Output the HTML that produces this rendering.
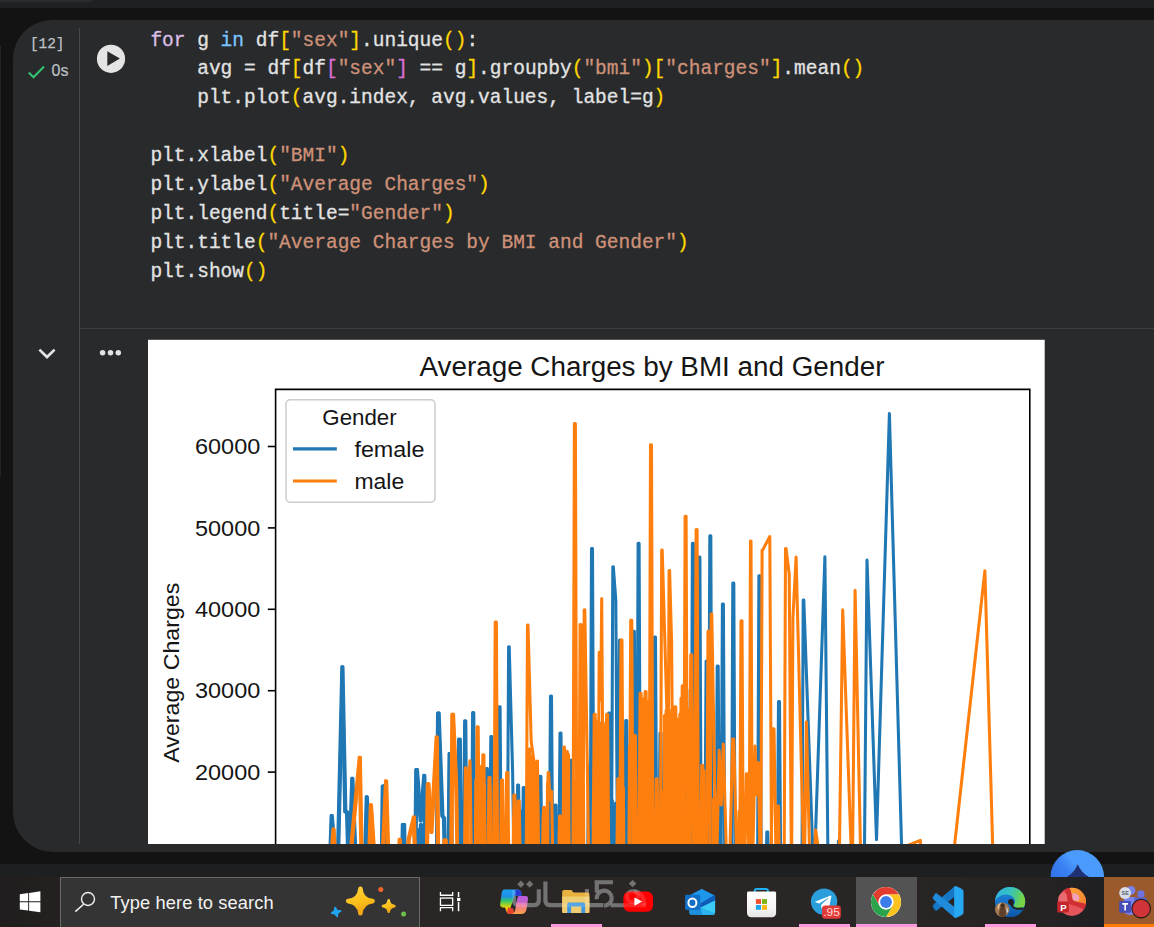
<!DOCTYPE html>
<html><head><meta charset="utf-8"><title>colab</title>
<style>
html,body{margin:0;padding:0;}
body{width:1154px;height:927px;overflow:hidden;background:#131314;position:relative;font-family:"Liberation Sans",sans-serif;}
.abs{position:absolute;}
#topbar{left:0;top:0;width:1154px;height:8px;background:#1f2022;}
#toptab{left:0;top:0;width:92px;height:2px;background:#2b2c2f;border-bottom-right-radius:6px;}
#cell{left:13px;top:20px;width:1141px;height:831.6px;background:#282a2c;border-radius:39px 0 0 40px;}
#vline{left:79px;top:28px;width:1px;height:816px;background:#47494c;}
#hline{left:80px;top:328px;width:1074px;height:1px;background:#3c3e41;}
#leftstrip{left:0;top:46px;width:1.4px;height:431px;background:#232426;}
#band2{left:0;top:864px;width:1154px;height:13px;background:#1e1f21;}
#taskbar{left:0;top:877px;width:1154px;height:50px;background:linear-gradient(90deg,#1f1d1d 0,#242120 5%,#2a2625 38%,#2a2625 70%,#262323 90%,#1f2023 95.5%);}
.code{-webkit-text-stroke:0.3px;font-family:"Liberation Mono",monospace;font-size:19.5px;line-height:28.875px;color:#e3e3e3;white-space:pre;left:150.4px;top:26.6px;letter-spacing:0px;}
.k1{color:#dcbfe6}.k2{color:#7cc5ff}.s{color:#ce9178}.y{color:#ffd700}.m{color:#da70d6}
#exec{-webkit-text-stroke:0.25px;left:29.9px;top:35.5px;font-family:"Liberation Mono",monospace;font-size:14.4px;color:#bdc1c6;line-height:16px;}
#zs{-webkit-text-stroke:0.2px;left:51.6px;top:62.4px;font-size:16px;color:#bdc1c6;line-height:18px;}
</style></head><body>
<div class="abs" id="topbar"></div><div class="abs" id="toptab"></div>
<div class="abs" id="leftstrip"></div>
<div class="abs" id="cell"></div>
<div class="abs" id="vline"></div><div class="abs" id="hline"></div>
<div class="abs" id="exec">[12]</div>
<svg class="abs" style="left:27px;top:64px" width="20" height="16" viewBox="0 0 20 16"><path d="M1.8 8.6 L6.5 13.2 L17 2.6" fill="none" stroke="#34c472" stroke-width="2.1"/></svg>
<div class="abs" id="zs">0s</div>
<svg class="abs" style="left:96px;top:44px" width="30" height="30" viewBox="0 0 30 30"><circle cx="15" cy="14.8" r="14.1" fill="#e4e4e4"/><path d="M11.3 7.2 L23.9 14.6 L11.3 22 Z" fill="#28292b"/></svg>
<div class="abs code"><span class="k1">for</span> g <span class="k2">in</span> df<span class="y">[</span><span class="s">"sex"</span><span class="y">]</span>.unique<span class="y">()</span>:
    avg = df<span class="y">[</span>df<span class="m">[</span><span class="s">"sex"</span><span class="m">]</span> == g<span class="y">]</span>.groupby<span class="y">(</span><span class="s">"bmi"</span><span class="y">)[</span><span class="s">"charges"</span><span class="y">]</span>.mean<span class="y">()</span>
    plt.plot<span class="y">(</span>avg.index, avg.values, label=g<span class="y">)</span>

plt.xlabel<span class="y">(</span><span class="s">"BMI"</span><span class="y">)</span>
plt.ylabel<span class="y">(</span><span class="s">"Average Charges"</span><span class="y">)</span>
plt.legend<span class="y">(</span>title=<span class="s">"Gender"</span><span class="y">)</span>
plt.title<span class="y">(</span><span class="s">"Average Charges by BMI and Gender"</span><span class="y">)</span>
plt.show<span class="y">()</span></div>
<svg class="abs" style="left:36px;top:344px" width="22" height="18" viewBox="0 0 22 18"><path d="M3.4 5.6 L11 13 L18.6 5.6" fill="none" stroke="#e3e3e3" stroke-width="2.7"/></svg>
<svg class="abs" style="left:98px;top:348px" width="26" height="10" viewBox="0 0 26 10"><circle cx="4.6" cy="4.7" r="2.75" fill="#e3e3e3"/><circle cx="12.5" cy="4.7" r="2.75" fill="#e3e3e3"/><circle cx="20.3" cy="4.7" r="2.75" fill="#e3e3e3"/></svg>
<svg class="abs" style="left:148px;top:339px" width="897" height="505" viewBox="148 339 897 505">
<rect x="148" y="339.8" width="896.7" height="504.2" fill="#fff"/>
<defs><clipPath id="ax"><rect x="275.6" y="389.4" width="754" height="470"/></clipPath><clipPath id="lft"><rect x="275.6" y="389.4" width="183" height="470"/></clipPath></defs>
<g clip-path="url(#ax)" fill="none" stroke-width="3.05" stroke-linejoin="round" stroke-linecap="butt">
<g stroke="#1f77b4">
<polyline points="414.7,905.0 415.5,827.2 416.3,905.0 417.1,830.5 417.9,905.0 418.7,829.4 419.5,905.0 420.3,824.6 421.1,905.0 421.9,824.4 422.7,905.0 423.5,824.7 424.3,905.0 425.1,828.2 425.9,905.0"/>
<polyline points="515.2,905.0 516.0,803.2 516.8,905.0 517.6,808.3 518.4,905.0 519.2,807.8 520.0,905.0 520.8,811.8 521.6,905.0 522.4,810.6 523.2,905.0 524.0,803.4 524.8,905.0"/>
<polyline points="605.2,905.0 606.0,803.1 606.8,905.0 607.6,801.8 608.4,905.0 609.2,806.4 610.0,905.0 610.8,805.5 611.6,905.0 612.4,800.6 613.2,905.0 614.0,806.8 614.8,905.0 615.6,803.1 616.4,905.0 617.2,804.5 618.0,905.0"/>
<polyline points="329.4,882.0 331.7,815.5 337.4,882.0 342.4,666.7 345.3,812.0 347.1,812.0 349.0,882.0 352.3,778.2 356.5,882.0 364.5,882.0 366.8,796.7 370.2,882.0 381.4,905.0 382.8,786.0 383.9,786.0 385.4,905.0 401.5,905.0 402.9,824.6 404.1,824.6 405.5,905.0 414.9,905.0 416.3,769.6 416.9,769.6 420.7,821.0 424.3,775.4 426.3,905.0 436.6,905.0 438.1,712.9 438.6,712.9 442.4,816.0 444.0,818.0 446.0,905.0 448.1,905.0 449.6,753.6 450.7,753.6 452.1,905.0 457.8,905.0 459.2,739.0 460.4,739.0 461.8,905.0 463.2,905.0 464.6,720.7 465.8,720.7 467.2,905.0 471.2,905.0 472.6,712.6 473.8,712.6 475.2,905.0 484.8,905.0 486.2,768.5 487.4,768.5 488.8,905.0 489.3,905.0 490.8,736.6 491.9,736.6 493.3,905.0 497.5,905.0 498.9,706.8 500.1,706.8 501.5,905.0 507.2,905.0 508.6,646.8 509.2,646.8 512.6,770.9 514.6,905.0 516.1,905.0 517.6,785.0 518.6,785.0 520.1,905.0 521.8,905.0 523.2,787.5 524.3,787.5 525.8,905.0 538.4,905.0 539.9,776.3 540.9,776.3 542.4,905.0 549.0,905.0 550.5,695.9 551.5,695.9 553.0,905.0 553.5,905.0 555.0,804.9 556.0,804.9 557.5,905.0 558.5,905.0 560.0,732.9 561.0,732.9 562.5,905.0 569.1,905.0 570.6,760.2 571.6,760.2 573.1,905.0 587.2,905.0 588.7,766.4 589.8,766.4 591.2,905.0 590.0,905.0 591.5,548.4 592.5,548.4 594.0,905.0 600.1,905.0 601.6,798.7 602.6,798.7 604.1,905.0 607.1,905.0 608.6,713.0 609.6,713.0 611.1,905.0 611.3,905.0 612.8,566.7 613.3,566.7 615.8,599.8 617.8,905.0 618.0,905.0 619.5,639.9 620.5,639.9 622.0,905.0 624.2,905.0 625.7,720.5 626.8,720.5 628.2,905.0 631.9,905.0 633.4,631.2 634.4,631.2 635.9,905.0 636.6,905.0 638.1,543.2 639.1,543.2 640.6,905.0 653.0,905.0 654.5,636.9 655.5,636.9 657.0,905.0 658.5,905.0 660.0,732.9 661.0,732.9 662.5,905.0 676.6,905.0 678.1,778.8 679.1,778.8 680.6,905.0 684.2,905.0 685.7,689.5 686.8,689.5 688.2,905.0 690.9,905.0 692.4,543.2 693.4,543.2 694.9,905.0 697.4,905.0 698.9,557.1 699.9,557.1 701.4,905.0 704.6,905.0 706.1,661.0 707.1,661.0 708.6,905.0 708.3,905.0 709.8,535.7 710.8,535.7 712.3,905.0 715.7,905.0 717.2,665.9 718.2,665.9 719.7,905.0 720.9,905.0 722.4,604.0 723.4,604.0 724.9,905.0 731.3,905.0 732.8,583.1 733.8,583.1 735.3,905.0 757.4,905.0 758.9,575.7 759.9,575.7 761.4,905.0 765.3,905.0 766.8,832.0 767.8,832.0 769.3,905.0 777.0,905.0 778.5,701.4 779.5,701.4 781.0,905.0 801.8,905.0 803.2,600.0 803.8,600.0 813.9,882.0 824.9,556.8 828.2,882.0 837.0,882.0 838.5,841.0 840.0,882.0 864.2,882.0 867.0,560.0 876.5,839.6 889.4,413.6 902.6,882.0"/>
<g clip-path="url(#lft)"><polyline points="329.4,882.0 331.7,815.5 337.4,882.0 342.4,666.7 345.3,812.0 347.1,812.0 349.0,882.0 352.3,778.2 356.5,882.0 364.5,882.0 366.8,796.7 370.2,882.0 381.4,905.0 382.8,786.0 383.9,786.0 385.4,905.0 401.5,905.0 402.9,824.6 404.1,824.6 405.5,905.0 414.9,905.0 416.3,769.6 416.9,769.6 420.7,821.0 424.3,775.4 426.3,905.0 436.6,905.0 438.1,712.9 438.6,712.9 442.4,816.0 444.0,818.0 446.0,905.0 448.1,905.0 449.6,753.6 450.7,753.6 452.1,905.0 457.8,905.0 459.2,739.0 460.4,739.0 461.8,905.0 463.2,905.0 464.6,720.7 465.8,720.7 467.2,905.0" transform="translate(-0.6 0)"/><polyline points="329.4,882.0 331.7,815.5 337.4,882.0 342.4,666.7 345.3,812.0 347.1,812.0 349.0,882.0 352.3,778.2 356.5,882.0 364.5,882.0 366.8,796.7 370.2,882.0 381.4,905.0 382.8,786.0 383.9,786.0 385.4,905.0 401.5,905.0 402.9,824.6 404.1,824.6 405.5,905.0 414.9,905.0 416.3,769.6 416.9,769.6 420.7,821.0 424.3,775.4 426.3,905.0 436.6,905.0 438.1,712.9 438.6,712.9 442.4,816.0 444.0,818.0 446.0,905.0 448.1,905.0 449.6,753.6 450.7,753.6 452.1,905.0 457.8,905.0 459.2,739.0 460.4,739.0 461.8,905.0 463.2,905.0 464.6,720.7 465.8,720.7 467.2,905.0" transform="translate(0.6 0)"/></g>
</g><g stroke="#ff7f0e">
<polyline points="467.0,905.0 467.8,777.3 468.6,905.0"/>
<polyline points="475.0,905.0 475.8,780.0 476.6,905.0"/>
<polyline points="478.2,905.0 479.0,768.4 479.8,905.0 480.6,766.4 481.4,905.0"/>
<polyline points="483.7,905.0 484.5,785.3 485.3,905.0"/>
<polyline points="493.3,905.0 494.1,785.7 494.9,905.0 495.7,780.2 496.5,905.0"/>
<polyline points="528.7,905.0 529.5,748.7 530.3,905.0 531.1,756.0 531.9,905.0 532.7,759.6 533.5,905.0 534.3,761.6 535.1,905.0 535.9,766.2 536.7,905.0 537.5,761.0 538.3,905.0"/>
<polyline points="542.4,905.0 543.2,814.4 544.0,905.0 544.8,813.0 545.6,905.0 546.4,813.9 547.2,905.0"/>
<polyline points="546.7,905.0 547.5,782.9 548.3,905.0"/>
<polyline points="563.0,905.0 563.8,757.6 564.6,905.0 565.4,754.7 566.2,905.0 567.0,758.9 567.8,905.0 568.6,754.5 569.4,905.0"/>
<polyline points="573.0,905.0 573.8,780.6 574.6,905.0 575.4,780.0 576.2,905.0"/>
<polyline points="579.4,905.0 580.2,785.7 581.0,905.0 581.8,787.9 582.6,905.0 583.4,784.6 584.2,905.0"/>
<polyline points="593.9,905.0 594.7,718.4 595.5,905.0 596.3,721.1 597.1,905.0 597.9,727.0 598.7,905.0 599.5,722.6 600.3,905.0 601.1,724.4 601.9,905.0 602.7,723.6 603.5,905.0 604.3,727.4 605.1,905.0 605.9,722.3 606.7,905.0"/>
<polyline points="622.6,905.0 623.4,787.9 624.2,905.0"/>
<polyline points="628.7,905.0 629.5,746.1 630.3,905.0"/>
<polyline points="641.4,905.0 642.2,698.6 643.0,905.0 643.8,698.7 644.6,905.0 645.4,698.0 646.2,905.0"/>
<polyline points="647.8,905.0 648.6,700.7 649.4,905.0 650.2,698.1 651.0,905.0 651.8,703.0 652.6,905.0"/>
<polyline points="662.8,905.0 663.6,790.3 664.4,905.0"/>
<polyline points="663.7,905.0 664.5,715.6 665.3,905.0 666.1,710.6 666.9,905.0 667.7,716.4 668.5,905.0 669.3,710.1 670.1,905.0 670.9,713.4 671.7,905.0 672.5,716.5 673.3,905.0 674.1,710.5 674.9,905.0 675.7,717.0 676.5,905.0"/>
<polyline points="675.2,905.0 676.0,726.1 676.8,905.0 677.6,719.3 678.4,905.0 679.2,725.9 680.0,905.0 680.8,721.5 681.6,905.0"/>
<polyline points="680.2,905.0 681.0,698.2 681.8,905.0 682.6,704.4 683.4,905.0"/>
<polyline points="688.2,905.0 689.0,709.7 689.8,905.0"/>
<polyline points="694.4,905.0 695.2,707.9 696.0,905.0 696.8,707.8 697.6,905.0"/>
<polyline points="701.8,905.0 702.6,768.7 703.4,905.0 704.2,770.9 705.0,905.0"/>
<polyline points="712.6,905.0 713.4,799.0 714.2,905.0 715.0,790.1 715.8,905.0"/>
<polyline points="329.4,882.0 333.5,829.0 336.5,882.0 348.0,882.0 359.8,757.3 362.0,882.0 368.5,882.0 370.9,804.7 376.0,882.0 381.5,882.0 386.1,780.9 389.0,882.0 398.0,882.0 399.7,839.3 401.5,882.0 407.0,882.0 408.7,839.3 413.9,817.1 415.6,882.0 426.4,905.0 427.8,783.8 428.4,783.8 431.4,832.5 436.7,737.0 438.7,905.0 443.0,905.0 444.4,840.0 445.6,840.0 447.0,905.0 451.0,905.0 452.4,714.2 453.0,714.2 456.4,789.7 458.4,905.0 464.0,905.0 465.4,767.8 466.0,767.8 468.0,792.0 470.0,760.7 472.0,905.0 475.7,905.0 477.1,726.7 478.2,726.7 479.7,905.0 481.4,905.0 482.8,754.8 483.9,754.8 485.4,905.0 487.5,905.0 488.9,777.6 490.1,777.6 491.5,905.0 493.8,905.0 495.2,622.0 496.4,622.0 497.8,905.0 500.0,905.0 501.4,780.0 502.6,780.0 504.0,905.0 505.2,905.0 506.6,772.6 507.8,772.6 509.2,905.0 512.4,905.0 513.9,795.0 514.9,795.0 516.4,905.0 516.8,905.0 518.2,801.0 519.3,801.0 520.8,905.0 526.0,905.0 527.5,625.0 528.0,625.0 531.2,741.6 534.5,765.0 537.2,761.4 539.2,905.0 542.1,905.0 543.6,807.3 544.6,807.3 546.1,905.0 546.6,905.0 548.1,772.6 548.6,772.6 550.0,800.0 551.6,791.2 553.6,905.0 558.0,905.0 559.5,816.0 560.5,816.0 562.0,905.0 562.4,905.0 563.9,747.0 564.4,747.0 566.0,760.0 567.4,751.5 569.4,905.0 572.9,905.0 574.4,423.6 575.4,423.6 576.9,905.0 578.6,905.0 580.1,624.6 581.1,624.6 582.6,905.0 582.8,905.0 584.2,609.7 584.8,609.7 587.3,763.9 589.3,905.0 592.7,905.0 594.2,714.3 595.2,714.3 596.7,905.0 597.7,905.0 599.2,652.3 599.7,652.3 600.7,700.0 601.7,598.5 603.7,905.0 605.1,905.0 606.6,714.3 607.6,714.3 609.1,905.0 616.3,905.0 617.8,778.8 618.8,778.8 620.3,905.0 619.5,905.0 621.0,639.9 622.0,639.9 623.5,905.0 629.2,905.0 630.7,620.3 631.8,620.3 633.2,905.0 632.9,905.0 634.4,735.4 635.4,735.4 636.9,905.0 638.6,905.0 640.1,693.2 641.1,693.2 642.6,905.0 643.6,905.0 645.1,691.5 646.1,691.5 647.6,905.0 649.0,905.0 650.5,444.7 651.5,444.7 653.0,905.0 654.7,905.0 656.2,778.8 657.2,778.8 658.7,905.0 660.2,905.0 661.7,550.1 662.2,550.1 666.7,704.4 668.7,905.0 667.6,905.0 669.1,570.5 669.6,570.5 671.6,642.3 673.6,905.0 673.3,905.0 674.8,706.8 675.8,706.8 677.3,905.0 678.3,905.0 679.8,714.3 680.8,714.3 682.3,905.0 680.8,905.0 682.2,685.8 683.3,685.8 684.8,905.0 683.6,905.0 685.1,516.3 686.1,516.3 687.6,905.0 689.2,905.0 690.7,654.7 691.8,654.7 693.2,905.0 694.6,905.0 696.1,529.5 697.1,529.5 698.6,905.0 700.3,905.0 701.8,765.2 702.8,765.2 704.3,905.0 706.5,905.0 708.0,631.2 709.0,631.2 710.5,905.0 709.8,905.0 711.2,613.9 711.8,613.9 716.3,882.0 719.2,750.2 721.2,805.0 723.3,744.0 727.2,882.0 728.6,905.0 732.7,739.0 733.8,739.0 737.8,905.0 737.6,905.0 739.1,811.0 740.1,811.0 741.6,905.0 739.5,905.0 741.0,620.8 742.0,620.8 743.5,905.0 744.1,905.0 746.4,773.8 747.4,773.8 749.7,905.0 749.0,905.0 750.5,540.9 751.0,540.9 752.3,882.0 755.1,746.1 756.8,795.0 758.2,762.5 760.6,882.0 760.6,905.0 762.1,550.1 762.6,550.1 769.8,536.5 771.8,905.0 770.3,905.0 773.0,728.7 774.0,728.7 776.7,905.0 776.0,905.0 777.5,806.0 778.5,806.0 780.0,905.0 784.0,905.0 785.5,548.4 786.0,548.4 789.2,573.7 791.5,882.0 792.9,618.4 796.1,557.1 804.3,882.0 806.4,721.7 810.3,882.0 813.2,882.0 815.6,830.0 823.5,882.0 839.0,882.0 842.7,609.7 852.3,882.0 855.1,590.3 861.2,882.0 905.0,846.5 920.3,840.4 922.8,882.0 950.5,882.0 984.9,570.7 993.7,882.0"/>
<g clip-path="url(#lft)"><polyline points="329.4,882.0 333.5,829.0 336.5,882.0 348.0,882.0 359.8,757.3 362.0,882.0 368.5,882.0 370.9,804.7 376.0,882.0 381.5,882.0 386.1,780.9 389.0,882.0 398.0,882.0 399.7,839.3 401.5,882.0 407.0,882.0 408.7,839.3 413.9,817.1 415.6,882.0 426.4,905.0 427.8,783.8 428.4,783.8 431.4,832.5 436.7,737.0 438.7,905.0 443.0,905.0 444.4,840.0 445.6,840.0 447.0,905.0 451.0,905.0 452.4,714.2 453.0,714.2 456.4,789.7 458.4,905.0 464.0,905.0 465.4,767.8 466.0,767.8 468.0,792.0" transform="translate(-0.6 0)"/><polyline points="329.4,882.0 333.5,829.0 336.5,882.0 348.0,882.0 359.8,757.3 362.0,882.0 368.5,882.0 370.9,804.7 376.0,882.0 381.5,882.0 386.1,780.9 389.0,882.0 398.0,882.0 399.7,839.3 401.5,882.0 407.0,882.0 408.7,839.3 413.9,817.1 415.6,882.0 426.4,905.0 427.8,783.8 428.4,783.8 431.4,832.5 436.7,737.0 438.7,905.0 443.0,905.0 444.4,840.0 445.6,840.0 447.0,905.0 451.0,905.0 452.4,714.2 453.0,714.2 456.4,789.7 458.4,905.0 464.0,905.0 465.4,767.8 466.0,767.8 468.0,792.0" transform="translate(0.6 0)"/></g>
</g></g>
<g fill="none" stroke="#000" stroke-width="1.6"><path d="M275.6 860 V389.4 H1029.8 V860"/></g>
<path d="M267.8 446.5 H275.6" stroke="#000" stroke-width="1.6"/>
<text x="260.3" y="454.1" text-anchor="end" font-size="22.3" textLength="65.3" lengthAdjust="spacingAndGlyphs" fill="#151515">60000</text>
<path d="M267.8 527.9 H275.6" stroke="#000" stroke-width="1.6"/>
<text x="260.3" y="535.5" text-anchor="end" font-size="22.3" textLength="65.3" lengthAdjust="spacingAndGlyphs" fill="#151515">50000</text>
<path d="M267.8 609.3 H275.6" stroke="#000" stroke-width="1.6"/>
<text x="260.3" y="616.9" text-anchor="end" font-size="22.3" textLength="65.3" lengthAdjust="spacingAndGlyphs" fill="#151515">40000</text>
<path d="M267.8 690.7 H275.6" stroke="#000" stroke-width="1.6"/>
<text x="260.3" y="698.3" text-anchor="end" font-size="22.3" textLength="65.3" lengthAdjust="spacingAndGlyphs" fill="#151515">30000</text>
<path d="M267.8 772.1 H275.6" stroke="#000" stroke-width="1.6"/>
<text x="260.3" y="779.7" text-anchor="end" font-size="22.3" textLength="65.3" lengthAdjust="spacingAndGlyphs" fill="#151515">20000</text>
<text x="419.5" y="375.7" font-size="26.8" textLength="465" lengthAdjust="spacingAndGlyphs" fill="#151515">Average Charges by BMI and Gender</text>
<text transform="translate(179.3 762.7) rotate(-90)" font-size="22.3" textLength="180" lengthAdjust="spacingAndGlyphs" fill="#151515">Average Charges</text>
<rect x="286" y="399.8" width="149" height="102.4" rx="4.2" ry="4.2" fill="#fff" fill-opacity="0.8" stroke="#ccc" stroke-width="1.5"/>
<text x="322.3" y="425" font-size="22.3" textLength="74.4" lengthAdjust="spacingAndGlyphs" fill="#151515">Gender</text>
<path d="M293 448.9 H336.8" stroke="#1f77b4" stroke-width="3.1"/>
<text x="354.4" y="456.7" font-size="22.3" textLength="70.1" lengthAdjust="spacingAndGlyphs" fill="#151515">female</text>
<path d="M293 481 H336.8" stroke="#ff7f0e" stroke-width="3.1"/>
<text x="354.4" y="488.8" font-size="22.3" textLength="49.8" lengthAdjust="spacingAndGlyphs" fill="#151515">male</text>
</svg>
<div class="abs" id="band2"></div>
<div class="abs" id="taskbar"></div>
<!-- floating blue button -->
<svg class="abs" style="left:1049px;top:849px" width="58" height="28" viewBox="1049 849 58 28">
<defs><linearGradient id="fb" gradientUnits="userSpaceOnUse" x1="1052" y1="880" x2="1082" y2="854"><stop offset="0" stop-color="#2f70ea"/><stop offset="0.45" stop-color="#3a81f2"/><stop offset="0.72" stop-color="#4a9bfd"/><stop offset="1" stop-color="#4a9bfd"/></linearGradient></defs>
<circle cx="1077.3" cy="876.8" r="26.7" fill="url(#fb)"/>
<path d="M1077.7 864.3 C1080 870 1084 874.5 1090 877.5 L1066 877.5 C1071.5 874.5 1075.5 870 1077.7 864.3 Z" fill="#1f3073"/>
</svg>
<!-- start -->
<svg class="abs" style="left:19px;top:890px" width="23" height="24" viewBox="19 890 23 24">
<path d="M19.8 894.2 L28.2 893 L28.2 901.3 L19.8 901.3 Z M29.1 892.9 L40.4 891.3 L40.4 901.3 L29.1 901.3 Z M19.8 902.2 L28.2 902.2 L28.2 910.6 L19.8 909.4 Z M29.1 902.2 L40.4 902.2 L40.4 912.3 L29.1 910.7 Z" fill="#fff"/>
</svg>
<!-- search box -->
<div class="abs" style="left:60px;top:877px;width:358px;height:49px;border:1px solid #6a6a6a;border-bottom:none;background:#343434;"></div>
<svg class="abs" style="left:72px;top:888px" width="28" height="28" viewBox="72 888 28 28"><circle cx="88" cy="899" r="6.5" fill="none" stroke="#f0f0f0" stroke-width="1.4"/><path d="M83.6 904.2 L75.3 911.6" stroke="#f0f0f0" stroke-width="1.5" fill="none"/></svg>
<div class="abs" id="stext" style="left:110.3px;top:891.5px;font-size:18.3px;line-height:22px;color:#f2f2f2;white-space:pre;letter-spacing:0.1px;">Type here to search</div>
<!-- sparkles -->
<svg class="abs" style="left:328px;top:884px" width="84" height="36" viewBox="328 884 84 36">
<defs><linearGradient id="gs" x1="0" y1="0" x2="0.3" y2="1"><stop offset="0" stop-color="#ffd23c"/><stop offset="0.6" stop-color="#fac01a"/><stop offset="1" stop-color="#f3a416"/></linearGradient></defs>
<path d="M360.4 888.9 Q361.5 900.0 372.6 901.1 Q361.5 902.2 360.4 913.3 Q359.3 902.2 348.2 901.1 Q359.3 900.0 360.4 888.9 Z" fill="url(#gs)" stroke="url(#gs)" stroke-width="4.6" stroke-linejoin="round"/>
<path d="M388.7 900.4 Q389.3 905.5 394.4 906.1 Q389.3 906.7 388.7 911.8 Q388.1 906.7 383.0 906.1 Q388.1 905.5 388.7 900.4 Z" fill="url(#gs)" stroke="url(#gs)" stroke-width="2.6" stroke-linejoin="round"/>
<g transform="rotate(-13 336.1 912)"><path d="M336.1 907.6 Q336.5 911.6 340.5 912.0 Q336.5 912.4 336.1 916.4 Q335.7 912.4 331.7 912.0 Q335.7 911.6 336.1 907.6 Z" fill="#20a4f1" stroke="#20a4f1" stroke-width="2" stroke-linejoin="round"/></g>
<circle cx="380.8" cy="889.5" r="2.5" fill="#f2652a"/>
<circle cx="403.6" cy="913.9" r="2.5" fill="#6cc04a"/>
</svg>
<!-- task view -->
<svg class="abs" style="left:438px;top:890px" width="24" height="24" viewBox="438 890 24 24" fill="none" stroke="#fff" stroke-width="1.3">
<path d="M440.45 892 V895.25 H452.65 V892"/>
<rect x="440.45" y="898.05" width="12.2" height="7.3"/>
<path d="M440.45 911.2 V907.65 H452.65 V911.2"/>
<path d="M458.55 892 V896.9 M458.55 902.1 V911.2" stroke-width="1.5"/><rect x="457" y="897.9" width="3.4" height="3.2" fill="#fff" stroke="none"/>
</svg>
<!-- chrome highlight -->
<div class="abs" style="left:856px;top:877px;width:61px;height:47px;background:#535353;"></div>
<!-- teams highlight -->
<div class="abs" style="left:1104px;top:877px;width:50px;height:47px;background:#9a5a2b;"></div>
<div class="abs" style="left:1104px;top:924px;width:50px;height:3px;background:#ff7a00;"></div>
<!-- pink underlines -->
<div class="abs" style="left:551px;top:924px;width:51px;height:3px;background:#ff97de;"></div>
<div class="abs" style="left:799px;top:924px;width:51px;height:3px;background:#ff97de;"></div>
<div class="abs" style="left:856px;top:924px;width:61px;height:3px;background:#ff97de;"></div>
<div class="abs" style="left:985px;top:924px;width:51px;height:3px;background:#ff97de;"></div>
<!-- watermark under -->
<svg class="abs" style="left:508px;top:877px" width="142" height="34" viewBox="508 877 142 34" fill="none" stroke="#5e5d5d" stroke-width="4.1">
<path d="M514 890 V900.6 Q514 905.1 518.5 905.1 H534.3 Q538.8 905.1 538.8 900.6 V889.3"/>
<path d="M545.4 881.4 V900.6 Q545.4 905.1 549.9 905.1 H603.4"/>
<path d="M587 889 V905.1"/>
<path d="M594.6 882.3 H612.9 M596.8 880.2 V892.4"/>
<path d="M596.8 899.2 A7.5 7.5 0 1 1 604.2 905.6"/>
<path d="M610.6 905.2 H645.8"/>
<circle cx="632.5" cy="896.7" r="5.5"/>
<path d="M634 891.3 Q644.3 892.6 644.3 905.2"/>
<g stroke="none" fill="#5e5d5d" fill-opacity="1">
<path d="M520.9 880.6 L524.5 884.2 L520.9 887.8 L517.3 884.2 Z"/>
<path d="M529.7 880.6 L533.3 884.2 L529.7 887.8 L526.1 884.2 Z"/>
<path d="M632.6 879.9 L636.3 883.6 L632.6 887.3 L628.9 883.6 Z"/>
</g>
</svg>
<!-- copilot -->
<svg class="abs" style="left:498px;top:887px" width="34" height="30" viewBox="498 887 34 30">
<defs>
<linearGradient id="cp1" x1="0" y1="0" x2="0" y2="1"><stop offset="0" stop-color="#1ea0f2"/><stop offset="0.28" stop-color="#1f8fe8"/><stop offset="0.45" stop-color="#2fc46c"/><stop offset="0.62" stop-color="#9fd22a"/><stop offset="0.74" stop-color="#f0d20a"/><stop offset="0.9" stop-color="#f59a20"/><stop offset="1" stop-color="#f07a2a"/></linearGradient>
<linearGradient id="cp2" x1="0" y1="0" x2="0" y2="1"><stop offset="0" stop-color="#b65ae0"/><stop offset="0.3" stop-color="#c463cf"/><stop offset="0.5" stop-color="#e8779f"/><stop offset="0.75" stop-color="#f58a6a"/><stop offset="1" stop-color="#fba349"/></linearGradient>
</defs>
<path d="M504.6 889.6 H517.2 C519.6 889.6 521 891 521.3 893 L521.6 895.6 H514.6 L510.6 907.4 C510 909.2 510.6 910.8 512 912 L513.4 914 H509.6 C507.6 914 506.6 912.6 506 910.6 L505 907.4 H502.6 C500.8 907.4 500 906 500.2 904 L501.8 892.6 C502.2 890.6 503 889.6 504.6 889.6 Z" fill="url(#cp1)"/>
<path d="M515 890 H517.6 C519.8 890 521 891.2 521.3 893 L521.6 895.6 H514.4 C515.6 893.8 515.6 891.8 515 890 Z" fill="#2638d6"/>
<path d="M508 907.6 L513.4 908.4 L514.2 914 H509.6 C508.6 914 507.8 913.4 507.2 912.4 Z" fill="#e8432c"/>
<path d="M519.4 896 H525.6 C527.4 896 528.2 897 528 898.8 L526.6 909 C526 912.4 524.2 914 521 914 H511.6 C513.6 913.6 514.6 912 515.2 910 L517.4 898 C517.7 896.6 518.2 896 519.4 896 Z" fill="url(#cp2)"/>
</svg>
<!-- folder -->
<svg class="abs" style="left:560px;top:888px" width="32" height="28" viewBox="560 888 32 28">
<path d="M562.2 892 C562.2 890.8 563 890 564.2 890 H571.3 L573.6 892.4 H587.4 C588.6 892.4 589.4 893.2 589.4 894.4 V912.9 H562.2 Z" fill="#e9b040"/>
<path d="M562.2 896.4 H589.4 V911 C589.4 912.2 588.6 912.9 587.4 912.9 H564.2 C563 912.9 562.2 912.2 562.2 911 Z" fill="#f0cd72"/>
<path d="M567.2 912.9 V904.6 C567.2 903.4 568 902.5 569.2 902.5 H583.2 C584.4 902.5 585.2 903.4 585.2 904.6 V912.9 H581.3 V906.5 H571.1 V912.9 Z" fill="#3f97e0"/>
</svg>
<!-- youtube -->
<svg class="abs" style="left:622px;top:890px" width="33" height="24" viewBox="622 890 33 24">
<rect x="623.4" y="891.5" width="29.6" height="20.3" rx="6" ry="6" fill="#fe0000"/>
<path d="M634.4 897.4 L642.4 901.6 L634.4 905.8 Z" fill="#fff"/>
</svg>
<!-- watermark over -->
<svg class="abs" style="left:508px;top:877px" width="142" height="34" viewBox="508 877 142 34" fill="none" stroke="#ffffff" stroke-opacity="0.14" stroke-width="4.1">
<path d="M514 890 V900.6 Q514 905.1 518.5 905.1 H534.3 Q538.8 905.1 538.8 900.6 V889.3"/>
<path d="M545.4 881.4 V900.6 Q545.4 905.1 549.9 905.1 H603.4"/>
<path d="M587 889 V905.1"/>
<path d="M594.6 882.3 H612.9 M596.8 880.2 V892.4"/>
<path d="M596.8 899.2 A7.5 7.5 0 1 1 604.2 905.6"/>
<path d="M610.6 905.2 H645.8"/>
<circle cx="632.5" cy="896.7" r="5.5"/>
<path d="M634 891.3 Q644.3 892.6 644.3 905.2"/>
<g stroke="none" fill="#ffffff" fill-opacity="0.14">
<path d="M520.9 880.6 L524.5 884.2 L520.9 887.8 L517.3 884.2 Z"/>
<path d="M529.7 880.6 L533.3 884.2 L529.7 887.8 L526.1 884.2 Z"/>
<path d="M632.6 879.9 L636.3 883.6 L632.6 887.3 L628.9 883.6 Z"/>
</g>
</svg>
<!-- outlook -->
<svg class="abs" style="left:683px;top:887px" width="34" height="30" viewBox="683 887 34 30">
<defs><clipPath id="olc"><path d="M689.3 896.6 C689.3 895.9 689.6 895.5 690.2 895.1 L700.6 889.4 C701.4 889 702 889 702.8 889.4 L713.8 895.1 C714.6 895.5 715.1 896 715.1 896.8 V912.2 C715.1 913.8 714 914.8 712.4 914.8 H692 C690.4 914.8 689.3 913.8 689.3 912.2 Z"/></clipPath></defs>
<g clip-path="url(#olc)">
<rect x="689" y="888" width="27" height="28" fill="#1e97ea"/>
<path d="M716 894 V900 L700.3 907.8 V903.6 Z" fill="#0e5cb6"/>
<path d="M716 900 V916 H698 L700.3 907.8 Z" fill="#3ccbf5"/>
<path d="M689 908 L700.3 907.8 L716 914 V916 H689 Z" fill="#1d8fdc"/>
<path d="M700.3 907.8 L716 914.4 V916 H703 Z" fill="#2db4ee"/>
</g>
<rect x="685.1" y="894.8" width="15.2" height="15.2" rx="1.4" fill="#1170c6"/>
<ellipse cx="692.4" cy="902.8" rx="4" ry="4.3" fill="none" stroke="#fff" stroke-width="2"/>
</svg>
<!-- store -->
<svg class="abs" style="left:745px;top:886px" width="34" height="33" viewBox="745 886 34 33">
<defs><linearGradient id="stg" x1="0" y1="0" x2="0" y2="1"><stop offset="0" stop-color="#ffffff"/><stop offset="0.6" stop-color="#f6f6f6"/><stop offset="1" stop-color="#e4e4e4"/></linearGradient></defs>
<path d="M754.7 893.6 V890.8 C754.7 889.6 755.5 888.9 756.7 888.9 H765.9 C767.1 888.9 767.9 889.6 767.9 890.8 V893.6" fill="none" stroke="#20b0f4" stroke-width="2"/>
<path d="M747 893.2 C747 892.2 747.6 891.6 748.6 891.6 H774.5 C775.5 891.6 776.1 892.2 776.1 893.2 V913 C776.1 915.6 774.4 917.2 771.9 917.2 H751.2 C748.7 917.2 747 915.6 747 913 Z" fill="url(#stg)"/>
<rect x="755.9" y="899.1" width="5.1" height="4.8" fill="#f0502a"/><rect x="762" y="899.1" width="5" height="4.8" fill="#7fb410"/>
<rect x="755.9" y="905" width="5.1" height="4.8" fill="#1ea6f0"/><rect x="762" y="905" width="5" height="4.8" fill="#fdb913"/>
</svg>
<!-- telegram -->
<svg class="abs" style="left:810px;top:887px" width="33" height="33" viewBox="810 887 33 33">
<circle cx="824.1" cy="901.6" r="13.2" fill="#2a9fdb"/>
<path transform="translate(824.1 901.6) scale(0.9) translate(-825.6 -901.6)" d="M816.2 901.6 L832.4 895 C833.2 894.7 833.8 895.2 833.6 896.2 L830.9 909 C830.7 909.9 830.1 910.1 829.3 909.7 L825.2 906.7 L823.2 908.6 C822.9 908.9 822.7 909 822.3 909 L822.6 904.8 L830.2 897.9 C830.5 897.6 830.1 897.5 829.7 897.7 L820.3 903.7 L816.3 902.4 C815.4 902.1 815.4 901.9 816.2 901.6 Z" fill="#fff"/>
<rect x="822.1" y="905.5" width="18.7" height="13.3" rx="3" fill="#e23b37"/>
<text x="823.2" y="916.3" font-size="11.6" fill="#ffd9d6" textLength="16.6" lengthAdjust="spacingAndGlyphs" font-family="Liberation Sans, sans-serif">.95</text>
</svg>
<!-- chrome -->
<svg class="abs" style="left:870px;top:886px" width="32" height="32" viewBox="-16 -16 32 32">
<circle r="15.05" fill="#fff"/>
<path d="M-13.03 -7.52 A15.05 15.05 0 0 1 13.03 -7.52 L0 -7.52 A7.52 7.52 0 0 0 -6.51 3.76 Z" fill="#e33b2e"/>
<path d="M13.03 -7.52 A15.05 15.05 0 0 1 0 15.05 L6.51 3.76 A7.52 7.52 0 0 0 0 -7.52 Z" fill="#fcc31e"/>
<path d="M0 15.05 A15.05 15.05 0 0 1 -13.03 -7.52 L-6.51 3.76 A7.52 7.52 0 0 0 6.51 3.76 Z" fill="#2ba24c"/>
<circle r="7.4" fill="#fff"/><circle r="5.9" fill="#3b7de9"/>
</svg>
<!-- vscode -->
<svg class="abs" style="left:931px;top:885px" width="34" height="34" viewBox="931 885 34 34">
<path d="M936.3 910.4 L954.6 896.2 V886.8 L934 904.4 C933 905.3 932.9 906.4 933.7 907.4 L934.6 908.8 C935.1 909.8 935.6 910.8 936.3 910.4 Z" fill="#1577c6" stroke="#1577c6" stroke-width="1" stroke-linejoin="round"/>
<path d="M936.3 893.6 L954.6 907.6 V917.2 L934 899.6 C933 898.7 932.9 897.6 933.7 896.6 L934.6 895.2 C935.1 894.2 935.6 893.2 936.3 893.6 Z" fill="#1f8bda" stroke="#1f8bda" stroke-width="1" stroke-linejoin="round"/>
<path d="M954.6 886.8 C955.6 886.4 956.4 886.6 957.4 887.1 L961.6 889.2 C962.6 889.7 963.1 890.5 963.1 891.6 V912.4 C963.1 913.5 962.6 914.3 961.6 914.8 L957.4 916.9 C956.4 917.4 955.6 917.6 954.6 917.2 Z" fill="#27a8f2" stroke="#27a8f2" stroke-width="0.8" stroke-linejoin="round"/>
</svg>
<!-- edge -->
<svg class="abs" style="left:993px;top:885px" width="34" height="34" viewBox="993 885 34 34">
<defs>
<linearGradient id="eg1" x1="0" y1="0" x2="1" y2="0.25"><stop offset="0" stop-color="#2aaeea"/><stop offset="0.5" stop-color="#35c3c0"/><stop offset="0.8" stop-color="#52cb7a"/><stop offset="1" stop-color="#7ad545"/></linearGradient>
<linearGradient id="eg2" x1="0" y1="0" x2="0" y2="1"><stop offset="0" stop-color="#1f86d8"/><stop offset="0.55" stop-color="#1672c8"/><stop offset="1" stop-color="#0c56a8"/></linearGradient>
</defs>
<circle cx="1010.1" cy="902" r="15.1" fill="url(#eg2)"/>
<path d="M995.1 900.6 C995.8 892.6 1002.3 886.9 1010.1 886.9 C1018.5 886.9 1025.2 893.6 1025.2 901.6 C1025.2 904 1024.6 906 1023.6 907.6 L1017.4 907.9 C1014.8 907.8 1013.2 906.4 1013.4 904.6 C1014.6 903.8 1015.2 902.4 1015 900.8 C1014.6 897.4 1011 894.4 1006.4 894.4 C1001.4 894.4 997.2 897.4 995.1 900.6 Z" fill="url(#eg1)"/>
<path d="M1008 901.9 C1008 900.2 1009.2 898.9 1010.9 898.9 C1012.7 898.9 1014 900.3 1014 902 C1014 903.2 1013.6 904.2 1013.2 905.2 C1013.2 906.6 1014.8 907.7 1017.4 907.8 L1023.7 907.5 L1022.9 909.4 C1020 910 1016.6 910 1014.4 909 C1012 907.9 1010.8 906.2 1010.4 904.8 C1009 904.6 1008 903.4 1008 901.9 Z" fill="#221f1f"/>
<circle cx="1002.2" cy="909.6" r="7.2" fill="#a47a52"/>
<path d="M997.4 906 C998.4 904 1000 902.8 1001.6 902.5 C1000 904.6 999 907 998.8 910.6 C998 909.4 997.4 907.6 997.4 906 Z" fill="#d9b88c"/>
<path d="M999 914.8 C999.2 909.6 1000.2 906.2 1002.6 905.8 C1005 906 1005.8 909.6 1006 915.2 C1004.8 916.2 1003.6 916.7 1002.3 916.8 C1001 916.6 1000 915.9 999 914.8 Z" fill="#5e3f2a"/>
<circle cx="1002.6" cy="905.4" r="2.2" fill="#46301f"/>
<path d="M1006.4 907 C1007.6 908.4 1008.4 910.2 1008.4 911.6 L1006.8 913 Z" fill="#c9d6e0"/>
</svg>
<!-- powerpoint -->
<svg class="abs" style="left:1055px;top:886px" width="34" height="32" viewBox="1055 886 34 32">
<defs><clipPath id="ppc"><circle cx="1071.9" cy="901.9" r="14.1"/></clipPath>
<linearGradient id="ppg" x1="0" y1="0" x2="1" y2="1"><stop offset="0" stop-color="#ffab3c"/><stop offset="1" stop-color="#f27c2c"/></linearGradient></defs>
<g clip-path="url(#ppc)">
<rect x="1055" y="886" width="34" height="32" fill="#e6545c"/>
<path d="M1067 886 H1090 V905.6 C1084 902.4 1078 903 1073.6 900.4 C1071.4 897 1072 892 1069.6 888.6 Z" fill="url(#ppg)"/>
<path d="M1062 887 L1069.4 888 C1072 892 1071 897.4 1073.4 900.6 C1078 903.2 1084 902.4 1090 905.4 L1085 911 C1081 906.6 1075 906.2 1070 904.2 C1066.6 902.4 1067.4 896 1065.4 892.4 C1064.6 890.4 1063.4 888.4 1062 887 Z" fill="#cf3034"/>
<path d="M1072.6 893.4 C1074.4 893 1076.6 893.6 1078 895 C1079.4 896.6 1079.6 898.8 1078.6 900.8 C1076.6 901 1074.6 900.8 1073.2 900 C1072 898 1072.2 895.4 1072.6 893.4 Z" fill="#f2a0bc"/>
<path d="M1058 896 C1061 893 1064 892 1066 893.6 C1067.4 896.6 1066.8 900.6 1068.6 903.4 L1060 903 Z" fill="#ea6a72"/>
</g>
<rect x="1057.2" y="901.4" width="11.7" height="11.2" rx="1.4" fill="#c4262c"/>
<text x="1060.2" y="910.7" font-size="9.6" font-weight="bold" fill="#fff" font-family="Liberation Sans, sans-serif">P</text>
</svg>
<!-- teams -->
<svg class="abs" style="left:1116px;top:884px" width="38" height="36" viewBox="1116 884 38 36">
<circle cx="1131" cy="890.3" r="4.4" fill="#7b83eb"/>
<circle cx="1140.9" cy="893.9" r="3.7" fill="#6a73e0"/>
<path d="M1124 897 H1134.6 C1136 897 1136.8 897.8 1136.8 899.2 V908 C1136.8 912 1134 914.9 1130 914.9 C1126.4 914.9 1124 912.6 1123 910 Z" fill="#7b83eb"/>
<path d="M1134 897.6 H1145 C1146 897.6 1146.6 898.2 1146.6 899.2 V906 C1146.6 909.6 1144.4 912 1141 912 C1138 912 1136 910 1135.4 907.6 Z" fill="#5b63d0"/>
<circle cx="1125.1" cy="893" r="5.9" fill="#d9dde8"/>
<text x="1121.6" y="895" font-size="5.4" fill="#555b66" font-weight="bold" font-family="Liberation Sans, sans-serif">SE</text>
<rect x="1119.2" y="900.9" width="11.8" height="11.8" rx="1.2" fill="#464eb8"/>
<path d="M1122.3 903.9 H1128 M1125.15 903.9 V910.4" stroke="#fff" stroke-width="1.6" fill="none"/>
<circle cx="1141.2" cy="908.6" r="9.3" fill="#d13438" stroke="#201a1a" stroke-width="1.1"/>
</svg>
</body></html>
